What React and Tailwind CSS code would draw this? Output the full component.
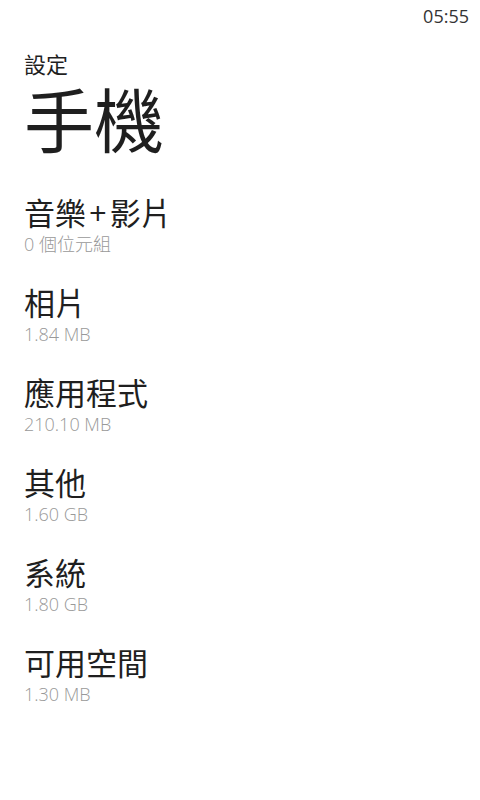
const items = [
  { title: ["音樂", "影片"], size: "0 個位元組" },
  { title: ["相片"], size: "1.84 MB" },
  { title: ["應用程式"], size: "210.10 MB" },
  { title: ["其他"], size: "1.60 GB" },
  { title: ["系統"], size: "1.80 GB" },
  { title: ["可用空間"], size: "1.30 MB" },
];

const font = {
  fontFamily: '"Open Sans", "Noto Sans CJK TC", sans-serif',
};

export default function App() {
  return (
    <div className="w-[480px] h-[800px] bg-white text-[#1f1f1f] overflow-hidden" style={font}>
      {/* status bar */}
      <div className="h-[32px] flex items-center justify-end pr-[11px] text-[18px] text-[#333]">
        05:55
      </div>

      <div className="px-[24px]">
        <div className="mt-[19px] text-[22px] leading-[26px]">設定</div>
        <div className="mt-[4px] text-[70px] leading-[80px]">手機</div>

        <div className="mt-[34px] flex flex-col gap-[28px]">
          {items.map((it) => (
            <div key={it.size}>
              <div className="text-[31px] leading-[36px]">
                {it.title[0]}
                {it.title[1] && (
                  <>
                    <span className="mx-[3px]">+</span>
                    {it.title[1]}
                  </>
                )}
              </div>
              <div className="text-[18px] leading-[26px] text-[#999] font-light">{it.size}</div>
            </div>
          ))}
        </div>
      </div>
    </div>
  );
}
